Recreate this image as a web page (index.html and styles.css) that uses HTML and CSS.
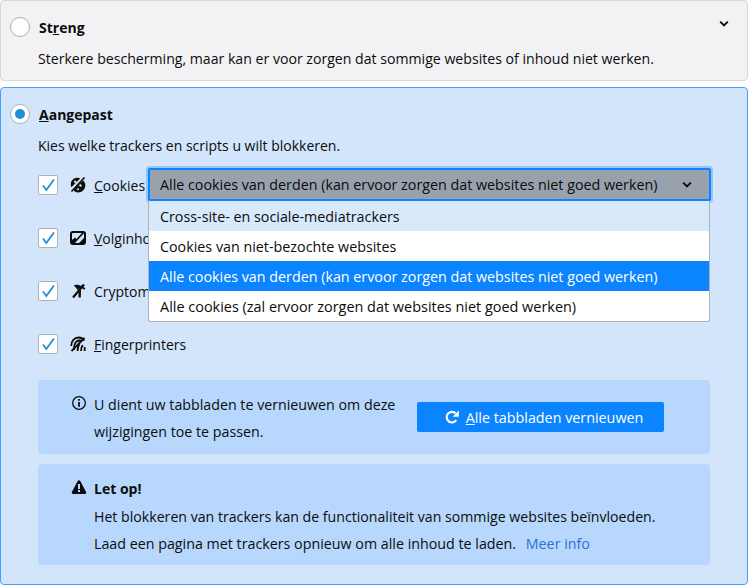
FILE: index.html
```html
<!DOCTYPE HTML>
<html>
<head>
  <meta charset="UTF-8">
  <title>Privacy settings</title>
  <link rel="stylesheet" href="styles.css">
</head>
<body>
  <section class="card">
    <div class="card-head">
      <span class="radio"></span>
      <b class="title">St<u>r</u>eng</b>
      <svg class="chevron" width="10" height="8" viewBox="0 0 10 8"><path d="M1.200 1.600 5 5.400l3.800-3.800" fill="none" stroke="#0c0c0d" stroke-width="2"/></svg>
    </div>
    <p class="desc desc-strict">Sterkere bescherming, maar kan er voor zorgen dat sommige websites of inhoud niet werken.</p>
  </section>

  <section class="card card-selected">
    <div class="card-head head-custom">
      <span class="radio radio-on"></span>
      <b class="title"><u>A</u>angepast</b>
    </div>
    <p class="desc desc-custom">Kies welke trackers en scripts u wilt blokkeren.</p>

    <div class="rows">
      <div class="row">
        <span class="check"><svg width="16" height="16" viewBox="0 0 16 16"><path d="M3 8.500 6.300 13 14 2.500" fill="none" stroke="#1f8fd8" stroke-width="1.800"/></svg></span>
        <svg class="row-icon" width="16" height="16" viewBox="0 0 16 16">
          <path d="M7 .8C3.500 1 .8 3.800.8 7.500c0 1 .2 2 .6 2.800L10.200 1.500C9.200 1 8.100.7 7 .8z" fill="#0c0c0d"/>
          <path d="M4 12.500 13 3.500c1.500 1.200 2.300 2.800 2.300 4.700 0 4-3.200 7.200-7.200 7.200-1.600 0-3-.5-4.100-1.400z" fill="#0c0c0d"/>
          <path d="M14.500.5 1.500 14.500" stroke="#0c0c0d" stroke-width="1.600"/>
          <circle cx="5.200" cy="4.800" r="1.200" fill="#d2e5fb"/>
          <circle cx="10.500" cy="8.500" r="1.200" fill="#d2e5fb"/>
          <circle cx="8" cy="12.300" r="1" fill="#d2e5fb"/>
        </svg>
        <span class="row-label"><u>C</u>ookies</span>
      </div>
      <div class="row">
        <span class="check"><svg width="16" height="16" viewBox="0 0 16 16"><path d="M3 8.500 6.300 13 14 2.500" fill="none" stroke="#1f8fd8" stroke-width="1.800"/></svg></span>
        <svg class="row-icon" width="16" height="16" viewBox="0 0 16 16">
          <rect x="1" y="2" width="14" height="12" rx="2" fill="none" stroke="#0c0c0d" stroke-width="2"/>
          <path d="M2 13V10L5 7.500 7 9.500 3.500 13z" fill="#0c0c0d"/>
          <path d="M9 13 14 8V13z" fill="#0c0c0d"/>
          <path d="M3 14 13.500 2.500" stroke="#0c0c0d" stroke-width="1.800"/>
        </svg>
        <span class="row-label"><u>V</u>olginhoud</span>
      </div>
      <div class="row">
        <span class="check"><svg width="16" height="16" viewBox="0 0 16 16"><path d="M3 8.500 6.300 13 14 2.500" fill="none" stroke="#1f8fd8" stroke-width="1.800"/></svg></span>
        <svg class="row-icon" width="16" height="16" viewBox="0 0 16 16">
          <path d="M3.500 2.500C6.500 1.300 9.500 1.800 11.500 3.500L7.500 7C6.500 5 5 3.500 3.500 2.500z" fill="#0c0c0d"/>
          <path d="M14 1.500 3 14.500" stroke="#0c0c0d" stroke-width="2.200"/>
          <path d="M8.500 9 11 6.500 10.800 14.500H8.500z" fill="#0c0c0d"/>
          <path d="M10.500 3 14.800 6" stroke="#0c0c0d" stroke-width="1.800"/>
        </svg>
        <span class="row-label">Cryptominers</span>
      </div>
      <div class="row row-last">
        <span class="check"><svg width="16" height="16" viewBox="0 0 16 16"><path d="M3 8.500 6.300 13 14 2.500" fill="none" stroke="#1f8fd8" stroke-width="1.800"/></svg></span>
        <svg class="row-icon" width="16" height="16" viewBox="0 0 16 16" fill="none" stroke="#0c0c0d">
          <path d="M1.200 10C1.200 5 4.500 1.500 8.500 1.500c2.500 0 4.500 1 5.800 3" stroke-width="1.800"/>
          <path d="M4 14c-.3-5 1.500-9.300 5-9.500 1 0 2 .2 2.700.8" stroke-width="1.800"/>
          <path d="M7.500 15c0-2.500.5-5 2-6.800" stroke-width="1.800"/>
          <path d="M11 15c0-1.800.3-4 1.800-5.800M14.700 15v-4" stroke-width="1.800"/>
          <path d="M1.500 15 14.500 2" stroke-width="1.800"/>
        </svg>
        <span class="row-label"><u>F</u>ingerprinters</span>
      </div>

      <div class="dropdown">
        <div class="select">
          <span>Alle cookies van derden (kan ervoor zorgen dat websites niet goed werken)</span>
          <svg width="10" height="8" viewBox="0 0 10 8"><path d="M1.200 1.600 5 5.400l3.800-3.800" fill="none" stroke="#0c0c0d" stroke-width="2"/></svg>
        </div>
        <ul class="menu">
          <li class="opt-first">Cross-site- en sociale-mediatrackers</li>
          <li>Cookies van niet-bezochte websites</li>
          <li class="opt-active">Alle cookies van derden (kan ervoor zorgen dat websites niet goed werken)</li>
          <li class="opt-last">Alle cookies (zal ervoor zorgen dat websites niet goed werken)</li>
        </ul>
      </div>
    </div>

    <div class="notice notice-reload">
      <svg class="notice-icon info-icon" width="16" height="16" viewBox="0 0 16 16"><circle cx="8" cy="8" r="6.300" fill="none" stroke="#0c0c0d" stroke-width="1.300"/><path d="M7.100 7h1.800v4.800H7.100zM7.100 4h1.800v1.800H7.100z" fill="#0c0c0d"/></svg>
      <p class="notice-text">U dient uw tabbladen te vernieuwen om deze wijzigingen toe te passen.</p>
      <button class="reload-btn">
        <svg width="16" height="16" viewBox="0 0 16 16"><path d="M12.300 11.200A5.300 5.300 0 1 1 11.600 4.200" fill="none" stroke="#fff" stroke-width="2.200"/><path d="M14.800 1.500v6.200h-6.200z" fill="#fff"/></svg>
        <span><u>A</u>lle tabbladen vernieuwen</span>
      </button>
    </div>

    <div class="notice notice-warn">
      <svg class="notice-icon" width="16" height="16" viewBox="0 0 16 16"><path d="M8 1.200c.6 0 1 .3 1.300.8l5.800 11c.5 1-.1 1.900-1.200 1.900H2.100c-1.100 0-1.700-.9-1.200-1.900l5.800-11c.3-.5.700-.8 1.300-.8zM7 5v5h2V5zm0 6v2h2v-2z" fill="#0c0c0d" fill-rule="evenodd"/></svg>
      <div class="warn-body">
        <b class="warn-title">Let op!</b>
        <p class="warn-line">Het blokkeren van trackers kan de functionaliteit van sommige websites beïnvloeden.</p>
        <p class="warn-line-long">Laad een pagina met trackers opnieuw om alle inhoud te laden. <a class="more-link" href="#">Meer info</a></p>
      </div>
    </div>
  </section>
</body>
</html>
```

FILE: styles.css
```css
body {
  margin: 0;
  height: 585px;
  overflow: hidden;
  font-family: "Open Sans", "Noto Sans", sans-serif;
  font-size: 14px;
  color: #0c0c0d;
  background: #fff;
}

p { margin: 0; }

.card {
  box-sizing: border-box;
  height: 81px;
  margin-bottom: 6px;
  padding: 0 9px;
  background: #f2f2f4;
  border: 1px solid #d7d7db;
  border-radius: 4px;
}

.card-selected {
  height: 498px;
  margin-bottom: 0;
  background: #d2e5fb;
  border-color: #45a1ff;
}

.card-head {
  display: flex;
  align-items: center;
  gap: 9px;
  height: 16px;
  margin-top: 18px;
}

.head-custom { margin-top: 18px; }

.radio {
  box-sizing: border-box;
  width: 20px;
  height: 20px;
  flex: none;
  background: #fff;
  border: 1px solid #b1b1b3;
  border-radius: 50%;
  display: flex;
  align-items: center;
  justify-content: center;
}

.radio-on::after {
  content: "";
  width: 10px;
  height: 10px;
  background: #1f8fd8;
  border-radius: 50%;
}

.title { font-weight: 700; }

.chevron { margin-left: auto; margin-right: 9px; margin-top: -7px; }

.desc {
  margin: 13px 0 0 28px;
  line-height: 22px;
}

.desc-strict { font-size: 14.12px; }

.desc-custom { margin-top: 13px; }

.rows {
  position: relative;
  margin: 18px 0 0 28px;
}

.row {
  display: flex;
  align-items: center;
  height: 20px;
  margin-bottom: 33px;
}

.row-last { margin-bottom: 0; }

.check {
  box-sizing: border-box;
  width: 20px;
  height: 20px;
  flex: none;
  display: flex;
  align-items: center;
  justify-content: center;
  background: #fff;
  border: 1px solid #b1b1b3;
  border-radius: 2px;
}

.row-icon { margin-left: 12px; flex: none; }

.row-label { margin-left: 8px; }

/* open dropdown sits over the rows */
.dropdown {
  position: absolute;
  left: 110px;
  top: -7px;
  width: 563px;
  font-size: 14.3px;
}

.select {
  box-sizing: border-box;
  height: 33px;
  display: flex;
  align-items: center;
  justify-content: space-between;
  padding: 0 17px 0 10px;
  background: #99a2ac;
  border: 2px solid #0a84ff;
  border-radius: 2px;
  box-shadow: 0 0 0 2px #93c5fb;
}

.menu {
  list-style: none;
  width: 560px;
  margin: 0;
  padding: 0;
  background: #fff;
  border: 1px solid #b1b1b3;
  border-top: 0;
  border-radius: 0 0 3px 3px;
}

.menu li {
  height: 30px;
  line-height: 32px;
  padding-left: 11px;
}

.menu .opt-first { background: #d8e9fc; }

.menu .opt-last { font-size: 14.45px; }

.menu .opt-active {
  background: #0a84ff;
  color: #fff;
}

.notice {
  width: 672px;
  margin-left: 28px;
  background: #b7d8fc;
  border-radius: 4px;
  box-sizing: border-box;
  display: flex;
}

.notice-reload {
  height: 74px;
  margin-top: 26px;
  padding: 16px 46px 0 33px;
}

.notice-warn {
  height: 101px;
  margin-top: 10px;
  padding: 15px 0 0 33px;
}

.notice-icon { flex: none; margin-right: 7px; }

.info-icon { margin-top: -1px; }

.notice-text {
  width: 315px;
  font-size: 14.24px;
  line-height: 27px;
  margin-top: -5px;
}

.reload-btn {
  box-sizing: border-box;
  width: 247px;
  height: 30px;
  margin: 6px 0 0 auto;
  padding: 0 0 0 6px;
  display: flex;
  align-items: center;
  justify-content: center;
  gap: 6px;
  border: 0;
  border-radius: 2px;
  background: #0a84ff;
  color: #fff;
  font: inherit;
  font-size: 14.32px;
}

.warn-body { line-height: 27px; }

.warn-title { display: block; line-height: 20px; margin-bottom: 4px; }

.warn-line { font-size: 14.15px; }

.warn-line-long { font-size: 14.27px; }

.more-link {
  margin-left: 6px;
  color: #2d6fd8;
  text-decoration: none;
}
```
